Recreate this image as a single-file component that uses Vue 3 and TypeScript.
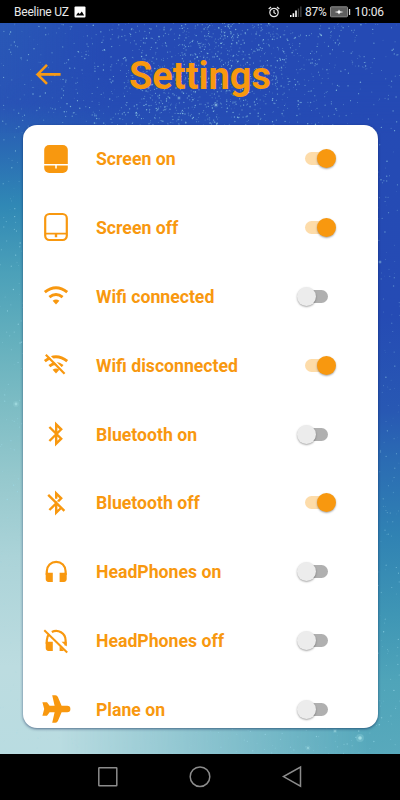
<script setup lang="ts">
import { ref } from 'vue'

interface Setting {
  label: string
  icon: string
  on: boolean
}

interface Star {
  x: number
  y: number
  r: number
  o: number
}

const settings = ref<Setting[]>([
  { label: 'Screen on', icon: 'screen', on: true },
  { label: 'Screen off', icon: 'screen-off', on: true },
  { label: 'Wifi connected', icon: 'wifi', on: false },
  { label: 'Wifi disconnected', icon: 'wifi-off', on: true },
  { label: 'Bluetooth on', icon: 'bluetooth', on: false },
  { label: 'Bluetooth off', icon: 'bluetooth-off', on: true },
  { label: 'HeadPhones on', icon: 'headphones', on: false },
  { label: 'HeadPhones off', icon: 'headphones-off', on: false },
  { label: 'Plane on', icon: 'plane', on: false },
])

// Deterministic generator, so the sky is the same on every load.
let seed = 20231
function random(): number {
  seed = (seed * 16807) % 2147483647
  return seed / 2147483647
}

const stars: Star[] = []
for (let i = 0; i < 3200; i++) {
  const x = random() * 400
  const y = random() * 731
  // Stars fade out in the pale lower left of the sky.
  const fade = y > 480 && x < 200 ? 0.3 : 1
  stars.push({ x, y, r: 0.35 + random() * 0.4, o: (0.2 + random() * 0.5) * fade })
}
// A denser band crosses the header.
for (let i = 0; i < 1100; i++) {
  const y = random() * 105
  const spread = (random() + random() + random() - 1.5) * 130
  stars.push({ x: 230 - y * 0.4 + spread, y, r: 0.4 + random() * 0.4, o: 0.2 + random() * 0.55 })
}
const brightStars: Star[] = [
  { x: 216, y: 82, r: 1.1, o: 0.6 },
  { x: 179, y: 75, r: 0.9, o: 0.5 },
  { x: 360, y: 715, r: 1.8, o: 0.7 },
  { x: 335, y: 708, r: 1, o: 0.5 },
  { x: 308, y: 725, r: 1.1, o: 0.5 },
  { x: 16, y: 381, r: 1.4, o: 0.5 },
  { x: 380, y: 239, r: 0.8, o: 0.6 },
]
</script>

<template>
  <div class="phone">
    <header class="status">
      <span class="carrier">Beeline UZ</span>
      <svg class="picture" viewBox="0 0 12 12">
        <rect x="0.5" y="0.5" width="11" height="11" rx="1" fill="#fff" />
        <path d="M2 9.5 4.2 6.5 5.8 8 7.8 5.4 10.2 9.5Z" fill="#000" />
      </svg>
      <span class="spacer"></span>
      <svg class="alarm" viewBox="0 0 12 12" fill="none" stroke="#e8e8e8" stroke-width="1.2">
        <circle cx="6" cy="6.5" r="4.2" />
        <path d="M6 4v2.7l1.8 1M.7 3 3 1M11.3 3 9 1" />
      </svg>
      <svg class="signal" viewBox="0 0 12 12">
        <path d="M0 9h1.5v2H0zM2.6 7.3h1.6V11H2.6zM5.2 4.5h1.6V11H5.2z" fill="#fff" />
        <path d="M7.8 2.5h1.3V11H7.8zM10.2.5h1.3V11h-1.3z" fill="#444" />
      </svg>
      <span class="percent">87%</span>
      <svg class="battery" viewBox="0 0 21 12">
        <rect x="0.5" y="0.8" width="17" height="10" rx="0.8" fill="#5e5e5e" stroke="#8a8a8a" />
        <path d="m4.5 6 3.6-.8L9 3.4l1 1.8 3.6.8-3.6.8-1 1.8-1-1.8z" fill="#fff" />
        <rect x="18.9" y="3" width="1.3" height="6" fill="#ddd" />
      </svg>
      <span class="time">10:06</span>
    </header>

    <main class="sky">
      <svg class="stars" viewBox="0 0 400 731">
        <circle v-for="(s, i) in stars" :key="i" :cx="s.x" :cy="s.y" :r="s.r" :opacity="s.o" fill="#9ddcec" />
        <g v-for="(s, i) in brightStars" :key="'b' + i" fill="#b5edf0">
          <circle :cx="s.x" :cy="s.y" :r="s.r * 2.2" :opacity="s.o * 0.3" />
          <circle :cx="s.x" :cy="s.y" :r="s.r" :opacity="s.o" />
        </g>
      </svg>

      <div class="title-bar">
        <button class="back" type="button" aria-label="Back">
          <svg viewBox="0 0 28 24" fill="none" stroke="#f89a14" stroke-width="2.6">
            <path d="M13 2.8 3.6 12.4l9.4 9.4M3 12.4h23.6" />
          </svg>
        </button>
        <h1>Settings</h1>
      </div>

      <section class="card">
        <div v-for="item in settings" :key="item.label" class="row">
          <svg class="icon" viewBox="0 0 30 30">
            <g v-if="item.icon === 'screen'">
              <rect x="3.2" y="1" width="23.6" height="28" rx="5" fill="currentColor" />
              <path d="M3 20.8h24M15 20.8v3.6" stroke="#fff" stroke-width="1.5" fill="none" />
            </g>
            <g v-else-if="item.icon === 'screen-off'" fill="none" stroke="currentColor">
              <rect x="4.2" y="2" width="21.6" height="26" rx="4.2" stroke-width="2.2" />
              <path d="M4 21.6h22" stroke-width="1.7" />
              <path d="M15 22v3.2" stroke-width="2.4" />
            </g>
            <g v-else-if="item.icon === 'wifi'" fill="none" stroke="currentColor" stroke-width="2.9">
              <path d="M3.8 11.2Q15 2.2 26.2 11.2M8.4 16.2Q15 10.8 21.6 16.2" />
              <path d="M11.6 19.8Q15 17.2 18.4 19.8L15 23.5Z" fill="currentColor" stroke="none" />
            </g>
            <g v-else-if="item.icon === 'wifi-off'" fill="none" stroke="currentColor" stroke-width="2.9">
              <path d="M3.8 11.2Q15 2.2 26.2 11.2M8.4 16.2Q15 10.8 21.6 16.2" />
              <path d="M11.6 19.8Q15 17.2 18.4 19.8L15 23.5Z" fill="currentColor" stroke="none" />
              <path d="m7.2 4.6 18 18.6" stroke="#fff" stroke-width="1.8" />
              <path d="m4.8 4.8 18.8 19" stroke-width="2.2" />
            </g>
            <g v-else-if="item.icon === 'bluetooth'" fill="none" stroke="currentColor" stroke-width="2.4">
              <path d="m8.4 8 11.8 11.7-5 5V5.3l5 5L8.4 22" />
            </g>
            <g v-else-if="item.icon === 'bluetooth-off'" fill="none" stroke="currentColor" stroke-width="2.4">
              <path d="M15.2 10.7V5.3l5 5-3.1 3.1M7.2 6.8l16.2 16.1M8.4 22l6.8-6.7v9.4l4.3-4.2" />
            </g>
            <g v-else-if="item.icon === 'headphones'">
              <path d="M5.8 18v-3.8a9.4 9.4 0 0 1 18.8 0V18" fill="none" stroke="currentColor" stroke-width="2.2" />
              <path d="M4.7 15.8h7.1v9.1H7.5a2.8 2.8 0 0 1-2.8-2.8zM18.6 15.8h7.1v6.3a2.8 2.8 0 0 1-2.8 2.8h-4.3z" fill="currentColor" />
            </g>
            <g v-else-if="item.icon === 'headphones-off'">
              <path d="M5.8 18v-3.8c0-2.4.8-4.6 2.4-6.3M10.8 6a9.4 9.4 0 0 1 13.8 8.2V19.5" fill="none" stroke="currentColor" stroke-width="2.2" />
              <path d="M4.7 15.8h7.1v9.1H7.5a2.8 2.8 0 0 1-2.8-2.8zM20.5 15.8h5.2V20.5zM18.6 20.2l4.2 4.2q-.6.5-1.4.5h-2.8z" fill="currentColor" />
              <path d="m3.3 4.2 22.9 22.3" fill="none" stroke="currentColor" stroke-width="2" />
            </g>
            <path
              v-else
              fill="currentColor"
              d="M26.2 11.8H20.6L17 3.2Q16.3 1.2 14.4 1.2H11.2L13.6 11.8H8.6L6 8.3H1.4L3.2 15 1.4 21.7H6l2.6-3.5h5L11.2 28.8h3.2q1.9 0 2.6-2l3.6-8.6h5.6a3.2 3.2 0 0 0 0-6.4Z"
            />
          </svg>
          <span class="label">{{ item.label }}</span>
          <button
            class="switch"
            :class="{ on: item.on }"
            type="button"
            role="switch"
            :aria-checked="item.on"
            :aria-label="item.label"
            @click="item.on = !item.on"
          >
            <span class="track"><span class="thumb"></span></span>
          </button>
        </div>
      </section>
    </main>

    <nav class="nav">
      <svg viewBox="0 0 24 24"><rect x="2.8" y="2.8" width="18" height="18" rx=".5" /></svg>
      <svg viewBox="0 0 24 24"><circle cx="12" cy="11.7" r="9.8" /></svg>
      <svg viewBox="0 0 24 24"><path d="M20.5 2v19.2L3.5 11.6Z" /></svg>
    </nav>
  </div>
</template>

<style>
body {
  background: #000;
}
</style>

<style scoped>
.phone {
  width: 400px;
  height: 800px;
  display: flex;
  flex-direction: column;
  overflow: hidden;
  font-family: Roboto, sans-serif;
  color: #f8980f;
}
.status {
  flex: none;
  box-sizing: border-box;
  height: 23px;
  padding: 1px 16px 0 14px;
  display: flex;
  align-items: center;
  background: #000;
  color: #e8e8e8;
  font-size: 12px;
}
.spacer {
  flex: 1;
}
.carrier {
  letter-spacing: -0.22px;
}
.picture {
  width: 12px;
  height: 12px;
  margin-left: 5px;
}
.alarm {
  width: 12px;
  height: 12px;
  margin-right: 10px;
}
.signal {
  width: 12px;
  height: 12px;
  margin-right: 3px;
}
.percent {
  letter-spacing: -0.2px;
}
.battery {
  width: 21px;
  height: 12px;
  margin: 0 4px 0 3px;
}
.time {
  font-size: 12px;
  letter-spacing: -0.1px;
}
.sky {
  position: relative;
  flex: 1;
  min-height: 0;
  display: flex;
  flex-direction: column;
  background: linear-gradient(180deg, #2a59b7 0%, #2954b6 11%, #2a6ab4 17%, #3088b5 25%, #4ba0b9 34%, #63afbd 43%, #7cbcc4 52%, #95c8cd 62%, #abd3d8 73%, #bcdce0 88%, #b9dce1 100%);
}
.sky::before {
  content: '';
  position: absolute;
  inset: 0;
  background: linear-gradient(180deg, #254ab4 0%, #254bb4 40%, #2858b3 53%, #2b6cb3 60%, #3082b3 70%, #3f96b5 81%, #4fa4b9 90%, #58a9bc 100%);
  mask-image: linear-gradient(90deg, transparent 15%, #000 92%);
}
.sky::after {
  content: '';
  position: absolute;
  inset: 0 0 auto;
  height: 110px;
  background: linear-gradient(90deg, rgba(37, 74, 180, 0), #254ab4 28%);
  mask-image: linear-gradient(180deg, #000 45%, rgba(0, 0, 0, 0.5));
}
.stars {
  position: absolute;
  inset: 0;
  z-index: 1;
  width: 400px;
  height: 731px;
}
.title-bar {
  position: relative;
  z-index: 2;
  flex: none;
  height: 102px;
  display: grid;
  grid-template-columns: 96px 1fr 96px;
  align-items: center;
}
.back {
  justify-self: center;
  padding: 0;
  border: 0;
  background: none;
  line-height: 0;
}
.back svg {
  width: 28px;
  height: 24px;
}
h1 {
  margin: 4px 0 0;
  text-align: center;
  font-size: 38px;
  line-height: 44px;
  font-weight: 700;
}
.card {
  position: relative;
  z-index: 2;
  box-sizing: border-box;
  flex: none;
  height: 603px;
  margin: 0 22px 0 23px;
  overflow: hidden;
  border-radius: 14px;
  background: #fff;
  box-shadow: 0 1px 3px rgba(0, 20, 70, 0.55);
}
.row {
  box-sizing: border-box;
  height: 68.85px;
  padding: 0 41.5px 1.6px 18px;
  display: flex;
  align-items: center;
}
.icon {
  flex: none;
  width: 30px;
  height: 30px;
}
.label {
  flex: 1;
  margin-left: 25px;
  padding-top: 1px;
  font-size: 17.65px;
  font-weight: 700;
}
.switch {
  flex: none;
  padding: 0;
  border: 0;
  background: none;
  display: flex;
  justify-content: flex-end;
  width: 40px;
}
.track {
  display: flex;
  align-items: center;
  width: 24px;
  height: 13px;
  margin-right: 8.5px;
  border-radius: 7px;
  background: #b0b0b0;
}
.thumb {
  flex: none;
  width: 19px;
  height: 19px;
  margin-left: -7px;
  border-radius: 50%;
  background: #ececec;
  box-shadow: 0 1px 2px rgba(0, 0, 0, 0.35);
}
.on .track {
  justify-content: flex-end;
  margin-right: 8px;
  background: #fddcaa;
}
.on .thumb {
  margin-right: -7px;
  background: #f8980f;
}
.nav {
  flex: none;
  height: 46px;
  display: flex;
  justify-content: center;
  align-items: center;
  gap: 68px;
  background: #000;
}
.nav svg {
  width: 24px;
  height: 24px;
  fill: none;
  stroke: #8c8c8c;
  stroke-width: 1.5;
}
</style>
